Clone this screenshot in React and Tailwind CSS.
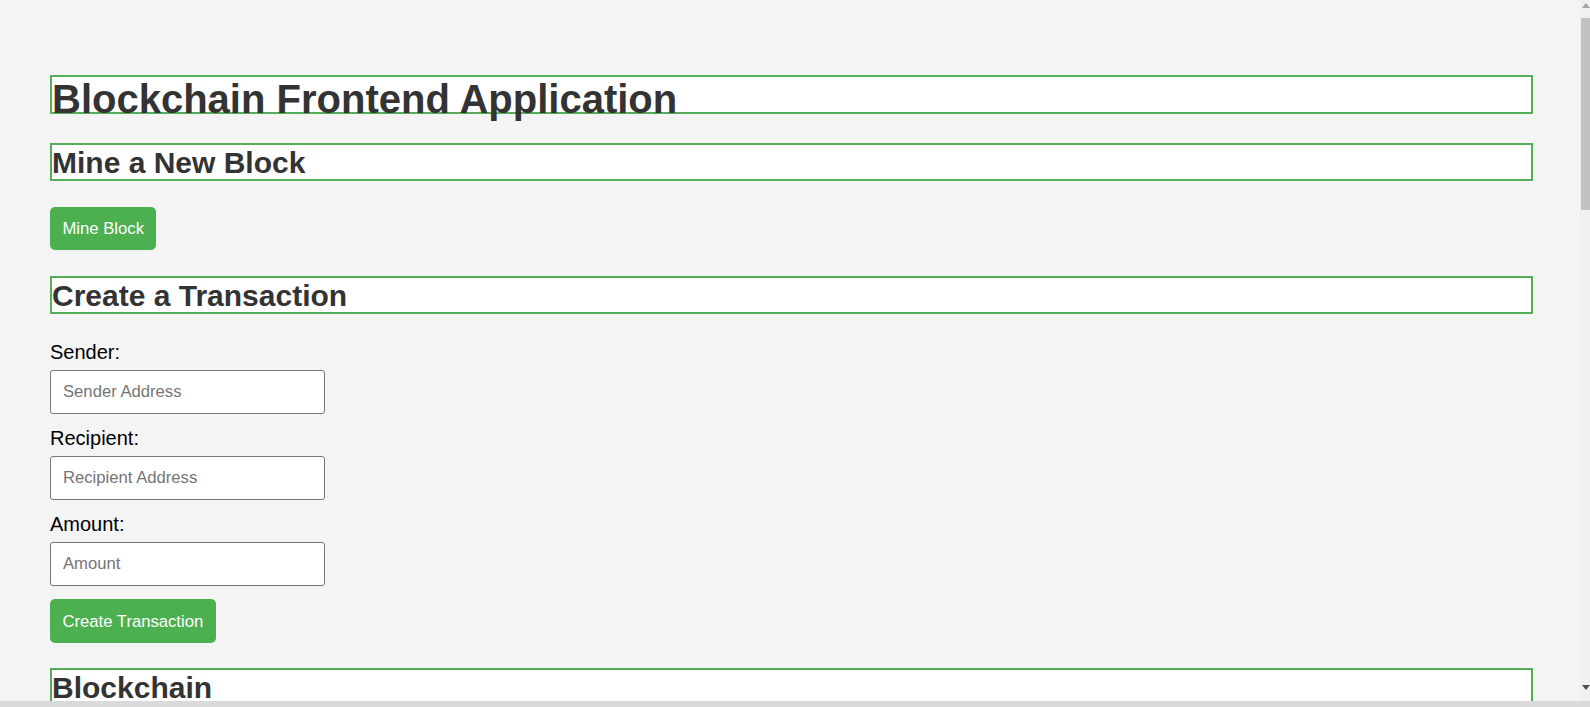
import React from "react";

function Heading({ level, children, className = "" }) {
  const Tag = level === 1 ? "h1" : "h2";
  const size =
    level === 1
      ? "h-[39px] text-[40px] leading-[44px]"
      : "h-[38px] text-[30px] leading-[35px]";
  return (
    <Tag
      className={`${size} ${className} whitespace-nowrap border-2 border-[#55ad58] bg-white font-bold text-[#333]`}
    >
      {children}
    </Tag>
  );
}

function Field({ label, placeholder, first }) {
  return (
    <div className={first ? "mt-[27px]" : "mt-[13px]"}>
      <label className="block text-[20px] leading-[23px] text-black">{label}</label>
      <input
        type="text"
        placeholder={placeholder}
        className="mt-[6px] block h-[44px] w-[275px] rounded-[3px] border border-[#767676] bg-white px-[12px] text-[16.67px] text-black outline-none placeholder:text-[#757575]"
      />
    </div>
  );
}

function GreenButton({ children, className = "" }) {
  return (
    <button
      className={`${className} block h-[43px] rounded-[5px] bg-[#4CAF50] px-[12.5px] text-[16.67px] text-white`}
    >
      {children}
    </button>
  );
}

export default function App() {
  return (
    <div
      className="flex h-screen flex-col overflow-hidden bg-[#f4f4f4]"
      style={{ fontFamily: '"Liberation Sans", Arial, sans-serif' }}
    >
      <div className="flex min-h-0 flex-1">
        <main className="min-w-0 flex-1 overflow-hidden pl-[50px] pr-[47px] pt-[75px]">
          <Heading level={1}>Blockchain Frontend Application</Heading>

          <Heading level={2} className="mt-[29px]">Mine a New Block</Heading>
          <GreenButton className="mt-[26px]">Mine Block</GreenButton>

          <Heading level={2} className="mt-[26px]">Create a Transaction</Heading>
          <Field first label="Sender:" placeholder="Sender Address" />
          <Field label="Recipient:" placeholder="Recipient Address" />
          <Field label="Amount:" placeholder="Amount" />
          <GreenButton className="mt-[13px] h-[44px]">Create Transaction</GreenButton>

          <Heading level={2} className="mt-[25px]">Blockchain</Heading>
        </main>

        {/* browser scrollbar */}
        <div className="flex w-[10px] flex-col bg-[#f0f0f0]">
          <div className="flex h-[18px] items-start justify-end pt-[3px]">
            <div className="h-0 w-0 border-x-[4px] border-b-[5px] border-x-transparent border-b-[#a3a3a3]" />
          </div>
          <div className="ml-px h-[192px] bg-[#c1c1c1]" />
          <div className="flex-1" />
          <div className="flex h-[16px] items-start justify-end pb-[3px]">
            <div className="h-0 w-0 border-x-[4px] border-t-[5px] border-x-transparent border-t-[#505050]" />
          </div>
        </div>
      </div>
      <div className="h-[6px] bg-[#dadada]" />
    </div>
  );
}
